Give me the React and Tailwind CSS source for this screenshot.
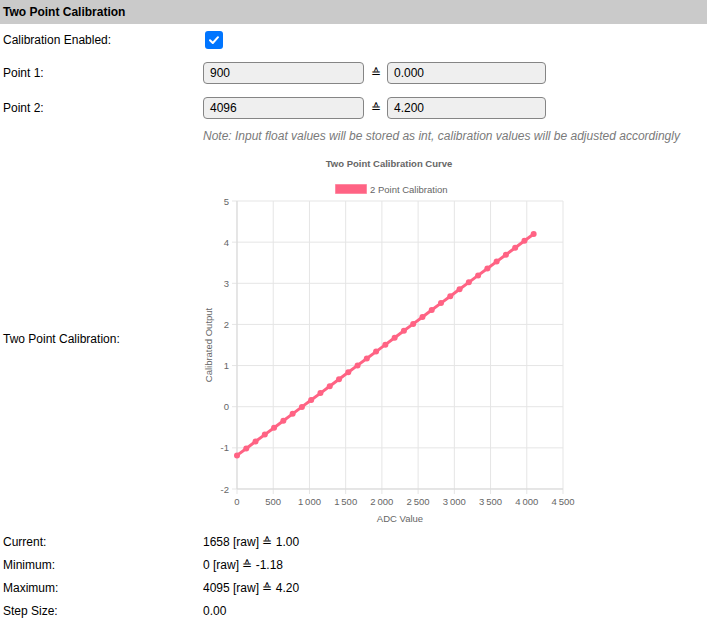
import React from 'react';

const font = { fontFamily: '"Liberation Sans", Arial, sans-serif' };

// plot area inside the svg (svg sits at page x=203, y=150)
const PL = 34;
const PR = 360;
const PT = 51;
const PB = 339;

const xPos = (v) => PL + (v / 4500) * (PR - PL);
const yPos = (v) => PT + ((5 - v) / 7) * (PB - PT);

const points = Array.from({ length: 33 }, (_, i) => {
  const raw = Math.min(i * 128, 4095);
  return { raw, val: ((raw - 900) * 4.2) / 3196 };
});

const xTicks = [0, 500, 1000, 1500, 2000, 2500, 3000, 3500, 4000, 4500];
const yTicks = [5, 4, 3, 2, 1, 0, -1, -2];

const fmt = (n) => (n >= 1000 ? `${Math.floor(n / 1000)}\u202f${String(n % 1000).padStart(3, '0')}` : String(n));

const CalibrationChart = () => {
  const linePath = points.map((p, i) => `${i ? 'L' : 'M'}${xPos(p.raw).toFixed(1)} ${yPos(p.val).toFixed(1)}`).join(' ');
  return (
    <svg width="372" height="380" viewBox="0 0 372 380" style={font}>
      <text x="186" y="17" textAnchor="middle" fontSize="9.5" fontWeight="bold" fill="#666">
        Two Point Calibration Curve
      </text>
      <rect x="132.5" y="34.5" width="31" height="9" fill="#ff6384" stroke="#ff6384" strokeOpacity="0.5" />
      <text x="167" y="42.5" fontSize="9.5" fill="#666">2 Point Calibration</text>

      {/* grid */}
      {xTicks.map((t) => (
        <line key={`gx${t}`} x1={xPos(t)} x2={xPos(t)} y1={PT} y2={PB + 5} stroke="#e5e5e5" strokeWidth="1" />
      ))}
      {yTicks.map((t) => (
        <line key={`gy${t}`} x1={PL - 5} x2={PR} y1={yPos(t)} y2={yPos(t)} stroke="#e5e5e5" strokeWidth="1" />
      ))}
      <line x1={PL} x2={PL} y1={PT} y2={PB} stroke="#d9d9d9" />
      <line x1={PL} x2={PR} y1={PB} y2={PB} stroke="#d9d9d9" />

      {/* tick labels */}
      {yTicks.map((t) => (
        <text key={`ly${t}`} x={PL - 8} y={yPos(t) + 3.5} textAnchor="end" fontSize="9.5" fill="#666">
          {t}
        </text>
      ))}
      {xTicks.map((t) => (
        <text key={`lx${t}`} x={xPos(t)} y={PB + 16} textAnchor="middle" fontSize="9.5" fill="#666">
          {fmt(t)}
        </text>
      ))}
      <text x="197" y="372" textAnchor="middle" fontSize="9.5" fill="#666">ADC Value</text>
      <text x="9" y="195" textAnchor="middle" fontSize="9.5" fill="#666" transform="rotate(-90 9 195)">
        Calibrated Output
      </text>

      {/* data */}
      <path d={linePath} fill="none" stroke="#ff6384" strokeWidth="3" strokeLinejoin="round" />
      {points.map((p) => (
        <circle key={p.raw} cx={xPos(p.raw)} cy={yPos(p.val)} r="3" fill="#ff6384" />
      ))}
    </svg>
  );
};

const Field = ({ value, width }) => (
  <div className={`h-[22px] ${width} rounded-[4px] border border-[#858585] bg-[#efefef] pl-[6px] flex items-center text-[12px] text-black`}>
    {value}
  </div>
);

const PointRow = ({ label, raw, val, height }) => (
  <div className={`flex items-center ${height}`}>
    <div className="w-[203px] pl-[3px]">{label}</div>
    <Field value={raw} width="w-[161px]" />
    <span className="w-[23px] text-center text-[12px]">≙</span>
    <Field value={val} width="w-[159px]" />
  </div>
);

const StatRow = ({ label, value }) => (
  <div className="flex items-center h-[23px]">
    <div className="w-[203px] pl-[3px]">{label}</div>
    <div>{value}</div>
  </div>
);

export default function App() {
  return (
    <div className="w-[707px] h-[620px] bg-white text-[12px] text-black overflow-hidden" style={font}>
      <div className="h-[24px] bg-[#cacaca] flex items-center pl-[3px] font-bold">Two Point Calibration</div>

      <div className="flex items-center h-[32px]">
        <div className="w-[203px] pl-[3px]">Calibration Enabled:</div>
        <div className="ml-[2px] w-[18px] h-[18px] rounded-[3px] bg-[#0075ff] flex items-center justify-center">
          <svg width="12" height="12" viewBox="0 0 12 12">
            <path d="M2 6.2 L4.8 9 L10 3.2" fill="none" stroke="#fff" strokeWidth="2" strokeLinecap="round" strokeLinejoin="round" />
          </svg>
        </div>
      </div>

      <PointRow label="Point 1:" raw="900" val="0.000" height="h-[34px]" />
      <PointRow label="Point 2:" raw="4096" val="4.200" height="h-[35px]" />

      <div className="flex items-center h-[22px]">
        <div className="w-[203px]" />
        <div className="italic text-[#7a7a7a]">
          Note: Input float values will be stored as int, calibration values will be adjusted accordingly
        </div>
      </div>

      <div className="flex items-center h-[383px]">
        <div className="w-[203px] pl-[3px]">Two Point Calibration:</div>
        <div className="pt-[3px]">
          <CalibrationChart />
        </div>
      </div>

      <StatRow label="Current:" value="1658 [raw] ≙ 1.00" />
      <StatRow label="Minimum:" value="0 [raw] ≙ -1.18" />
      <StatRow label="Maximum:" value="4095 [raw] ≙ 4.20" />
      <StatRow label="Step Size:" value="0.00" />
    </div>
  );
}
